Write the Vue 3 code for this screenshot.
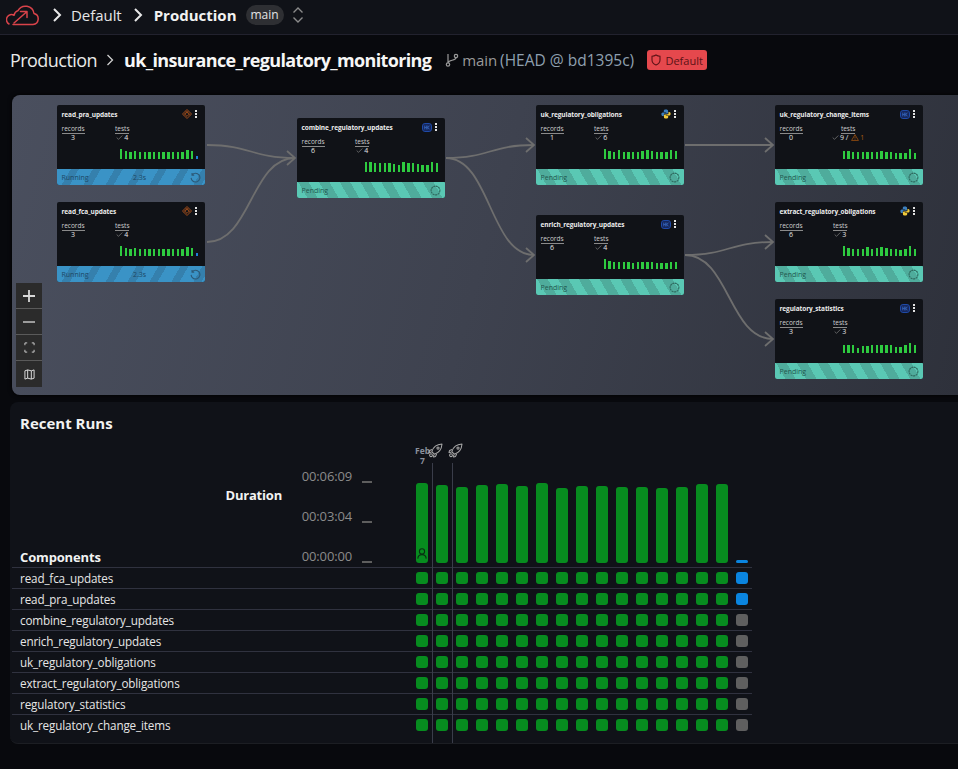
<script setup>
const nodes = [
  { name: 'read_pra_updates', x: 45, y: 10, rec: 3, icon: 'diamond', state: 'run', dur: '2.3s', tests: 4, bars: [10,8,7,8,7,7,7,7,7,7,7,7,7,7,9,8,3] },
  { name: 'read_fca_updates', x: 45, y: 107, rec: 3, icon: 'diamond', state: 'run', dur: '2.3s', tests: 4, bars: [10,8,7,8,7,7,7,7,7,7,7,7,7,7,9,8,3] },
  { name: 'combine_regulatory_updates', x: 285, y: 23, rec: 6, icon: 'hk', state: 'pend', tests: 4, bars: [10,10,9,9,9,9,8,7,10,9,9,8,7,7,10,9] },
  { name: 'uk_regulatory_obligations', x: 524, y: 10, rec: 1, icon: 'py', state: 'pend', tests: 6, bars: [10,8,7,9,7,7,7,7,8,9,8,7,7,7,9,8] },
  { name: 'enrich_regulatory_updates', x: 524, y: 120, rec: 6, icon: 'hk', state: 'pend', tests: 4, bars: [10,8,7,7,7,7,6,7,7,7,7,6,6,6,7,7] },
  { name: 'uk_regulatory_change_items', x: 763, y: 10, rec: 0, icon: 'hk', state: 'pend', tests: 9, warn: 1, bars: [8,8,7,7,7,7,7,7,8,7,7,6,6,6,10,6], wide: true },
  { name: 'extract_regulatory_obligations', x: 763, y: 107, rec: 6, icon: 'py', state: 'pend', tests: 3, bars: [10,8,7,7,7,9,7,8,9,8,7,7,6,7,10,7] },
  { name: 'regulatory_statistics', x: 763, y: 204, rec: 3, icon: 'hk', state: 'pend', tests: 3, bars: [8,8,8,5,7,7,8,8,8,8,8,6,6,8,10,8] }
]
const edges = [
  'M195 50 C239 50 239 63 283 63',
  'M195 147 C239 147 239 63 283 63',
  'M434 63 C478 63 478 50 522 50',
  'M434 63 C478 63 478 160 522 160',
  'M673 50 L761 50',
  'M673 160 C717 160 717 147 761 147',
  'M673 160 C717 160 717 244 761 244'
]
const arrows = [[283, 63], [522, 50], [522, 160], [761, 50], [761, 147], [761, 244]]
const runHeights = [80, 78, 76, 78, 79, 77, 80, 75, 77, 77, 76, 76, 75, 76, 79, 79]
const comps = [
  { name: 'read_fca_updates', last: 'blue' },
  { name: 'read_pra_updates', last: 'blue' },
  { name: 'combine_regulatory_updates', last: 'grey' },
  { name: 'enrich_regulatory_updates', last: 'grey' },
  { name: 'uk_regulatory_obligations', last: 'grey' },
  { name: 'extract_regulatory_obligations', last: 'grey' },
  { name: 'regulatory_statistics', last: 'grey' },
  { name: 'uk_regulatory_change_items', last: 'grey' }
]
const axis = ['00:06:09', '00:03:04', '00:00:00']
</script>

<template>
  <div class="page">
    <header class="topbar">
      <svg class="logo" viewBox="0 0 34 22" width="34" height="22" fill="none" stroke="#d9434a" stroke-width="1.5" stroke-linecap="round" stroke-linejoin="round">
        <path d="M7 20.5 H27 A5.6 5.6 0 0 0 28 9.5 A8.6 8.6 0 0 0 12 6.6 A6 6 0 0 0 8 11.3 A4.8 4.8 0 0 0 3 20 " />
        <path d="M8 19 L20.5 8 M14.5 7.6 H21 V13.6" />
      </svg>
      <svg class="crumb first" viewBox="0 0 10 16" width="10" height="16" fill="none" stroke="#e8e8e8" stroke-width="2"><path d="M2 2 L8 8 L2 14" /></svg>
      <span class="tb-default">Default</span>
      <svg class="crumb" viewBox="0 0 10 16" width="10" height="16" fill="none" stroke="#e8e8e8" stroke-width="2"><path d="M2 2 L8 8 L2 14" /></svg>
      <strong class="tb-prod">Production</strong>
      <span class="pill">main</span>
      <svg class="updown" viewBox="0 0 12 18" width="12" height="18" fill="none" stroke="#8b8b8b" stroke-width="1.4"><path d="M1.5 6.5 L6 2 L10.5 6.5 M1.5 11.5 L6 16 L10.5 11.5" /></svg>
    </header>

    <section class="titlerow">
      <span class="t-env">Production</span>
      <svg class="t-sep" viewBox="0 0 8 12" width="8" height="12" fill="none" stroke="#d0d0d0" stroke-width="1.3"><path d="M1.5 1 L6.5 6 L1.5 11" /></svg>
      <strong class="t-name">uk_insurance_regulatory_monitoring</strong>
      <svg class="branch" viewBox="0 0 14 14" width="14" height="14" fill="none" stroke="#9a9a9a" stroke-width="1.2"><circle cx="3" cy="11.5" r="1.7" /><circle cx="11" cy="3" r="1.7" /><path d="M3 1 V9.8 M11 4.7 C11 8 3.5 6.5 3 9.8" /></svg>
      <span class="t-main">main</span>
      <span class="t-head">(HEAD @ bd1395c)</span>
      <span class="badge">
        <svg viewBox="0 0 12 14" width="10" height="12" fill="none" stroke="#5b1216" stroke-width="1.3"><path d="M6 1 C4.5 2 3 2.4 1.2 2.4 V7 C1.2 10 3.5 12 6 13 C8.5 12 10.8 10 10.8 7 V2.4 C9 2.4 7.5 2 6 1 Z" /></svg>
        Default
      </span>
    </section>

    <section class="canvas">
      <svg class="edges" width="946" height="300" fill="none" stroke="#6e6e6e" stroke-width="1.8">
        <path v-for="(d, i) in edges" :key="i" :d="d" />
        <path v-for="(a, i) in arrows" :key="'a' + i" :d="`M${a[0] - 8} ${a[1] - 7} L${a[0]} ${a[1]} L${a[0] - 8} ${a[1] + 7}`" />
      </svg>

      <article v-for="n in nodes" :key="n.name" class="node" :style="{ left: n.x + 'px', top: n.y + 'px' }">
        <div class="n-body">
          <div class="n-head">
            <span class="n-title">{{ n.name }}</span>
            <svg v-if="n.icon === 'diamond'" class="n-ico" viewBox="0 0 10 10" width="10" height="10" fill="none" stroke="#d8641c" stroke-width="0.7">
              <path d="M5 0.5 L9.5 5 L5 9.5 L0.5 5 Z M5 2.6 L7.4 5 L5 7.4 L2.6 5 Z" />
              <path d="M3.6 1.9 L8.1 6.4 M6.4 1.9 L1.9 6.4" stroke-width="0.45" />
            </svg>
            <svg v-else-if="n.icon === 'hk'" class="n-ico" viewBox="0 0 10 9" width="10" height="9">
              <rect x="0.5" y="0.5" width="9" height="8" rx="2.4" fill="#16275c" stroke="#1f4aa8" />
              <path d="M2.7 2.6 V6.4 M2.7 4.5 H4.4 M4.4 2.6 V6.4 M5.8 2.6 V6.4 M7.6 2.6 L5.8 4.5 L7.6 6.4" fill="none" stroke="#3f78d8" stroke-width="0.6" />
            </svg>
            <svg v-else class="n-ico" viewBox="0 0 10 10" width="10" height="10">
              <path d="M5 0.5 C3 0.5 2.8 1.2 2.8 2 V3 H5.2 V3.4 H1.8 C0.8 3.4 0.4 4.2 0.4 5.2 C0.4 6.2 0.9 7 1.8 7 H2.8 V5.8 C2.8 5 3.4 4.6 4 4.6 H6 C6.6 4.6 7.1 4.1 7.1 3.5 V2 C7.1 1 6.4 0.5 5 0.5 Z" fill="#3d7fbd" />
              <path d="M5 9.5 C7 9.5 7.2 8.8 7.2 8 V7 H4.8 V6.6 H8.2 C9.2 6.6 9.6 5.8 9.6 4.8 C9.6 3.8 9.1 3 8.2 3 H7.5 V4.2 C7.5 5 6.8 5.4 6.2 5.4 H4 C3.4 5.4 2.9 5.9 2.9 6.5 V8 C2.9 9 3.6 9.5 5 9.5 Z" fill="#f0c93a" />
            </svg>
            <span class="n-more"><i></i><i></i><i></i></span>
          </div>
          <div class="n-stats">
            <div class="n-col rec">
              <span class="n-label">records</span>
              <span class="n-val">{{ n.rec }}</span>
            </div>
            <div class="n-col" :class="{ wide: n.wide }">
              <span class="n-label">tests</span>
              <span class="n-val tests">
                <svg viewBox="0 0 8 6" width="7" height="5" fill="none" stroke="#9a9a9a" stroke-width="0.7"><path d="M0.6 3 L2.8 5.2 L7.4 0.6" /></svg>{{ n.tests }}<template v-if="n.warn">&nbsp;/&nbsp;<svg viewBox="0 0 10 9" width="8" height="7" fill="none" stroke="#b0590f" stroke-width="0.9"><path d="M5 0.8 L9.4 8.3 H0.6 Z M5 3.4 V5.8 M5 6.6 V7.4" /></svg><span class="warn">{{ n.warn }}</span></template>
              </span>
            </div>
          </div>
          <div class="spark">
            <i v-for="(h, i) in n.bars" :key="i" :class="{ blue: n.state === 'run' && i === n.bars.length - 1 }" :style="{ height: h + 'px' }"></i>
          </div>
        </div>
        <footer class="n-foot" :class="n.state">
          <span>{{ n.state === 'run' ? 'Running' : 'Pending' }}</span>
          <span v-if="n.dur" class="n-dur">{{ n.dur }}</span>
          <svg viewBox="0 0 12 12" width="11" height="11" fill="none" :stroke="n.state === 'run' ? '#2c5a78' : '#2f6b60'" stroke-width="1.2">
            <path v-if="n.state === 'run'" d="M2.2 3.2 A4.8 4.8 0 1 1 1.2 6.4 M2.2 1 V3.4 H4.6" />
            <circle v-else cx="6" cy="6" r="4.8" stroke-dasharray="2.2 0.6" />
          </svg>
        </footer>
      </article>

      <nav class="controls">
        <button><svg viewBox="0 0 14 14" width="14" height="14" stroke="#d8d8d8" stroke-width="1.8"><path d="M7 1 V13 M1 7 H13" /></svg></button>
        <button><svg viewBox="0 0 14 14" width="14" height="14" stroke="#d8d8d8" stroke-width="1.3"><path d="M1 7 H13" /></svg></button>
        <button><svg viewBox="0 0 12 12" width="11" height="11" fill="none" stroke="#d8d8d8" stroke-width="1"><path d="M1 3.5 V1 H3.5 M8.5 1 H11 V3.5 M11 8.5 V11 H8.5 M3.5 11 H1 V8.5" /></svg></button>
        <button><svg viewBox="0 0 12 12" width="11" height="11" fill="none" stroke="#e6e6e6" stroke-width="1"><path d="M1 2 L4 1 L8 2 L11 1 V10 L8 11 L4 10 L1 11 Z M4 1 V10 M8 2 V11" /></svg></button>
      </nav>
    </section>

    <section class="runs">
      <h2>Recent Runs</h2>
      <div class="chart">
        <div class="chart-left">
          <span class="comp-title">Components</span>
          <span class="dur-title">Duration</span>
          <div class="axis">
            <div v-for="a in axis" :key="a" class="tick"><span>{{ a }}</span><i></i></div>
          </div>
        </div>
        <div class="chart-right">
          <div class="markers">
            <span class="date">Feb<br />7</span>
            <svg v-for="m in 2" :key="m" class="rocket" viewBox="0 0 15 15" width="15" height="15" fill="none" stroke="#a8a8a8" stroke-width="1.05" stroke-linejoin="round">
              <path d="M5 9.8 L3.8 8.6 C5 4.6 8.6 1.4 14 1 C13.6 6.4 10.4 10 6.4 11.2 Z" />
              <path d="M4 6.5 L1.6 7.4 L1 9.4 L3.4 9.2 M8.6 11 L7.6 13.4 L5.6 14 L5.8 11.6" />
              <circle cx="3" cy="12.2" r="1.4" />
              <circle cx="10" cy="5" r="1.1" />
            </svg>
          </div>
          <div class="bars">
            <div v-for="(h, i) in runHeights" :key="i" class="bar" :style="{ height: h + 'px' }">
              <svg v-if="i === 0" viewBox="0 0 10 11" width="10" height="11" fill="none" stroke="#083012" stroke-width="1.1"><circle cx="5" cy="3.4" r="2.6" /><path d="M0.8 10.6 C1 7.6 3 6.6 5 6.6 C7 6.6 9 7.6 9.2 10.6" /></svg>
            </div>
            <div class="bar run"></div>
          </div>
        </div>
      </div>
      <div class="rows">
        <div v-for="c in comps" :key="c.name" class="row">
          <span class="row-name">{{ c.name }}</span>
          <div class="cells">
            <i v-for="k in 16" :key="k"></i>
            <i :class="c.last"></i>
          </div>
        </div>
        <i class="vline l1"></i>
        <i class="vline l2"></i>
      </div>
    </section>
  </div>
</template>

<style>
html, body { margin: 0; background: #08090d; }
</style>

<style scoped>
.page {
  width: 958px;
  height: 769px;
  overflow: hidden;
  background: #08090d;
  color: #f2f2f2;
  font-family: "Open Sans", "Noto Sans", sans-serif;
}

/* top bar */
.topbar {
  height: 35px;
  box-sizing: border-box;
  border-bottom: 1px solid #22222e;
  background: #101218;
  display: flex;
  align-items: center;
  padding: 0 0 4px 6px;
}
.crumb.first { margin-left: 12px; }
.tb-default { margin-left: 9px; font-size: 15px; letter-spacing: -0.05px; color: #e6e6e6; }
.crumb { margin-left: 11px; }
.tb-prod { margin-left: 11px; font-size: 15px; font-weight: 700; letter-spacing: 0; }
.pill {
  margin-left: 9px;
  height: 20px;
  width: 38px;
  border-radius: 10px;
  background: #2e2f33;
  font-size: 12px;
  text-align: center;
  line-height: 20px;
  color: #e4e4e4;
}
.updown { margin-left: 8px; }

/* title */
.titlerow {
  height: 60px;
  display: flex;
  align-items: center;
  padding: 0 0 10px 10px;
  box-sizing: border-box;
}
.t-env { font-size: 18px; letter-spacing: -0.55px; color: #e9e9e9; }
.t-sep { margin-left: 9px; }
.t-name { margin-left: 10px; font-size: 18px; font-weight: 700; letter-spacing: -0.65px; color: #f6f6f6; }
.branch { margin-left: 14px; }
.t-main { margin-left: 3px; font-size: 15px; letter-spacing: -0.1px; color: #9a9a9a; }
.t-head { margin-left: 3px; font-size: 15.5px; letter-spacing: 0; color: #8fa0b0; }
.badge {
  margin-left: 13px;
  width: 60px;
  height: 20px;
  box-sizing: border-box;
  border-radius: 3px;
  background: #e5484d;
  color: #5b1216;
  font-size: 11px;
  display: flex;
  align-items: center;
  justify-content: center;
  gap: 4px;
}

/* canvas */
.canvas {
  position: relative;
  margin-left: 12px;
  height: 300px;
  border-radius: 8px 0 0 8px;
  background: linear-gradient(105deg, #4a4f5e 0%, #3e424f 50%, #2e313b 100%);
  box-shadow: 0 0 4px #000;
}
.edges { position: absolute; left: 0; top: 0; }

.node {
  position: absolute;
  width: 148px;
  height: 80px;
  border-radius: 2px;
  overflow: hidden;
  background: #101217;
  display: flex;
  flex-direction: column;
  font-size: 6.5px;
}
.n-body { flex: 1; padding: 0 5px 0 4.5px; display: flex; flex-direction: column; position: relative; }
.n-head { height: 18px; display: flex; align-items: center; }
.n-title { flex: 1; font-weight: 700; color: #ececec; letter-spacing: -0.1px; }
.n-ico { flex: none; }
.n-more { width: 8px; display: flex; flex-direction: column; align-items: center; gap: 1.3px; }
.n-more i { width: 1.7px; height: 1.7px; background: #e2e2e2; }
.n-stats { display: flex; margin-top: 2px; }
.n-col { display: flex; flex-direction: column; align-items: center; }
.n-col.rec { width: 53.5px; align-items: flex-start; }
.n-col.rec .n-val { width: 23px; text-align: center; }
.n-col.wide { margin-left: -1px; }
.n-label { color: #cfcfcf; border-bottom: 1px solid #8a8a8a; line-height: 7.5px; }
.n-val { color: #e4e4e4; font-size: 7px; line-height: 7px; }
.tests { display: flex; align-items: center; gap: 1px; white-space: nowrap; }
.warn { color: #b0590f; }
.spark {
  position: absolute;
  right: 7px;
  top: 44px;
  height: 10px;
  display: flex;
  align-items: flex-end;
  gap: 2.35px;
}
.spark i { width: 2.4px; background: #2ecb40; }
.spark i.blue { background: #1d7fd6; }

.n-foot {
  height: 16px;
  display: flex;
  align-items: center;
  justify-content: space-between;
  padding: 0 4px 0 4.5px;
  font-size: 7px;
  position: relative;
}
.n-foot.run {
  color: #1d4764;
  background: repeating-linear-gradient(120deg, #3a93c6 0 12px, #3580ad 12px 19px);
}
.n-foot.pend {
  color: #22584e;
  background: repeating-linear-gradient(60deg, #5ac8b4 0 9px, #4fac9c 9px 18px);
}
.n-dur { position: absolute; left: 76px; }

.controls {
  position: absolute;
  left: 4px;
  top: 188px;
  width: 26px;
  display: flex;
  flex-direction: column;
}
.controls button {
  height: 26px;
  padding: 0;
  border: 0;
  border-bottom: 1px solid #5a5a5a;
  background: #2b2b2b;
  display: flex;
  align-items: center;
  justify-content: center;
  box-sizing: border-box;
}
.controls button:last-child { border-bottom: 0; }

/* recent runs */
.runs {
  margin: 7px 0 0 10px;
  height: 342px;
  box-sizing: border-box;
  padding-top: 11px;
  border-radius: 8px 0 0 8px;
  border-bottom: 1px solid #1c1e23;
  background: #101218;
}
.runs h2 {
  margin: 0 0 1px 10px;
  font-size: 15px;
  line-height: 20px;
  font-weight: 700;
}
.chart { display: flex; height: 133px; }
.chart-left {
  width: 406px;
  position: relative;
  flex: none;
}
.comp-title {
  position: absolute;
  left: 10px;
  bottom: 1px;
  font-size: 13px;
  font-weight: 700;
  letter-spacing: -0.15px;
}
.dur-title {
  position: absolute;
  right: 134px;
  top: 52px;
  font-size: 13px;
  font-weight: 700;
  letter-spacing: -0.2px;
}
.axis {
  position: absolute;
  right: 44px;
  top: 32px;
  width: 90px;
  display: flex;
  flex-direction: column;
  gap: 20px;
}
.tick {
  display: flex;
  justify-content: flex-end;
  align-items: center;
  height: 20px;
  gap: 10px;
  font-size: 13px;
  letter-spacing: -0.15px;
  color: #8b8b8b;
}
.tick i { width: 10px; height: 2px; background: #5e5e5e; margin-top: 12px; }
.chart-right { flex: 1; position: relative; }
.markers {
  height: 28px;
  position: relative;
  display: flex;
  gap: 5px;
  padding-left: 12px;
  padding-top: 9px;
  box-sizing: border-box;
}
.date {
  position: absolute;
  left: -1px;
  top: 12px;
  width: 15px;
  text-align: center;
  font-size: 8.5px;
  line-height: 10px;
  font-weight: 700;
  color: #8a909c;
}
.rocket { flex: none; position: relative; }
.bars {
  position: absolute;
  left: 0;
  bottom: 4px;
  display: flex;
  align-items: flex-end;
  gap: 8px;
}
.bar {
  width: 12px;
  border-radius: 3px;
  background: #078c1f;
  display: flex;
  align-items: flex-end;
  justify-content: center;
  padding-bottom: 4px;
  box-sizing: border-box;
}
.bar.run { height: 3px; background: #0a85e0; padding: 0; border-radius: 2px; }

.rows { position: relative; width: 740px; margin-left: 2px; }
.row {
  height: 21px;
  box-sizing: border-box;
  border-top: 1px solid #30323f;
  display: flex;
  align-items: center;
}
.row-name { width: 404px; flex: none; padding-left: 8px; box-sizing: border-box; font-size: 11.7px; letter-spacing: -0.15px; color: #e6e6e6; }
.cells { display: flex; gap: 8px; }
.cells i { width: 12px; height: 12px; border-radius: 3px; background: #078c1f; }
.cells i.blue { background: #0a85e0; }
.cells i.grey { background: #5f5f5f; }
.vline { position: absolute; top: -104px; bottom: -8px; width: 1px; background: #3a3d4a; }
.vline.l1 { left: 420px; }
.vline.l2 { left: 440px; }
</style>
